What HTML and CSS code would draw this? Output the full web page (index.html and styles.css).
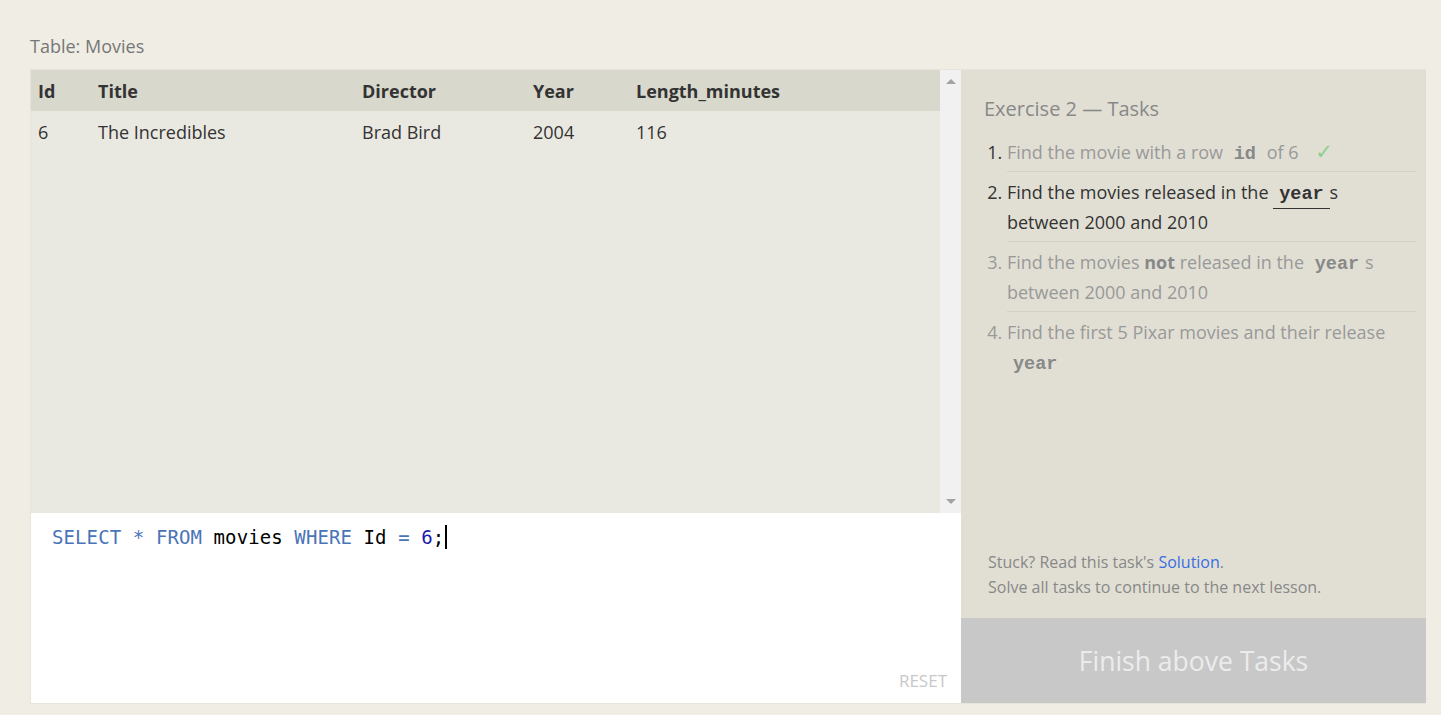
FILE: index.html
```html
<!DOCTYPE html>
<html>
<head>
<meta charset="utf-8">
<link rel="stylesheet" href="styles.css">
</head>
<body>
<div class="page">
  <div class="table-title">Table: Movies</div>
  <div class="main">
    <div class="left">
      <div class="results">
        <div class="table-wrap">
          <table class="data">
            <thead>
              <tr><th class="c-id">Id</th><th class="c-title">Title</th><th class="c-dir">Director</th><th class="c-year">Year</th><th>Length_minutes</th></tr>
            </thead>
            <tbody>
              <tr><td>6</td><td>The Incredibles</td><td>Brad Bird</td><td>2004</td><td>116</td></tr>
            </tbody>
          </table>
        </div>
        <div class="scrollbar">
          <span class="arrow up"></span>
          <span class="arrow down"></span>
        </div>
      </div>
      <div class="editor">
        <div class="code"><span class="kw">SELECT</span> <span class="kw">*</span> <span class="kw">FROM</span> movies <span class="kw">WHERE</span> Id <span class="kw">=</span> <span class="num">6</span>;<span class="cursor"></span></div>
        <div class="reset">RESET</div>
      </div>
    </div>
    <div class="right">
      <div class="tasks">
        <div class="tasks-title">Exercise 2 — Tasks</div>
        <ol class="task-list">
          <li class="done"><span class="t">Find the movie with a row <code>id</code> of 6</span> <span class="check">✓</span></li>
          <li class="active">Find the movies released in the <code class="ul">year</code>s between 2000 and 2010</li>
          <li class="todo">Find the movies <b>not</b> released in the <code>year</code>s between 2000 and 2010</li>
          <li class="todo">Find the first 5 Pixar movies and their release <code>year</code></li>
        </ol>
        <div class="footer-note">
          <div>Stuck? Read this task's <a class="sol">Solution</a>.</div>
          <div>Solve all tasks to continue to the next lesson.</div>
        </div>
      </div>
      <div class="finish">Finish above Tasks</div>
    </div>
  </div>
</div>
</body>
</html>
```
FILE: styles.css
```css
html, body {
  margin: 0;
  padding: 0;
  background: #f0ede5;
}
body {
  font-family: "Open Sans", "Noto Sans", sans-serif;
  color: #333;
}
.page {
  padding: 34px 15px 11px 30px;
}
.table-title {
  font-size: 18px;
  line-height: 24px;
  color: #777;
  margin-bottom: 11px;
}
.main {
  display: flex;
  height: 635px;
  border: 1px solid #e6e4dc;
  border-right: none;
  box-sizing: border-box;
}
.left {
  width: 930px;
  display: flex;
  flex-direction: column;
}
.results {
  height: 443px;
  display: flex;
  background: #eae9e1;
}
.table-wrap {
  flex: 1;
}
.data {
  border-collapse: collapse;
  width: 100%;
  font-size: 18px;
}
.data th {
  background: #d9d8cc;
  text-align: left;
  font-weight: 700;
  height: 40px;
  padding: 1px 0 0 7px;
  color: #333;
  vertical-align: middle;
}
.data td {
  height: 39px;
  padding: 1px 0 0 7px;
  color: #333;
}
.c-id { width: 53px; }
.c-title { width: 257px; }
.c-dir { width: 164px; }
.c-year { width: 96px; }
.scrollbar {
  width: 21px;
  background: #f1f1f1;
  display: flex;
  flex-direction: column;
  justify-content: space-between;
  align-items: center;
  padding: 9px 0 9px;
  box-sizing: border-box;
}
.arrow {
  width: 0;
  height: 0;
  border-left: 5px solid transparent;
  border-right: 5px solid transparent;
}
.arrow.up { border-bottom: 5px solid #a3a3a3; }
.arrow.down { border-top: 5px solid #a3a3a3; }
.editor {
  flex: 1;
  background: #fff;
  display: flex;
  flex-direction: column;
  justify-content: space-between;
  padding: 12px 14px 11px 21px;
}
.code {
  font-family: "DejaVu Sans Mono", "Liberation Mono", monospace;
  font-size: 19px;
  letter-spacing: 0.1px;
  line-height: 24px;
  color: #000;
  white-space: pre;
}
.kw { color: #4a74b8; }
.num { color: #1c1ab0; }
.cursor {
  display: inline-block;
  width: 2px;
  height: 24px;
  background: #000;
  vertical-align: top;
  margin-left: 1px;
}
.reset {
  align-self: flex-end;
  font-size: 17px;
  line-height: 22px;
  color: #c8c8c8;
}
.right {
  flex: 1;
  display: flex;
  flex-direction: column;
  background: #e1dfd4;
}
.tasks {
  flex: 1;
  display: flex;
  flex-direction: column;
  padding: 25px 10px 18px 23px;
}
.tasks-title {
  font-size: 20px;
  line-height: 28px;
  color: #888;
  margin-bottom: 9px;
}
.task-list {
  margin: 0;
  padding: 0;
  list-style: decimal outside;
  flex: 1;
}
.task-list li {
  margin-left: 23px;
  font-size: 18px;
  line-height: 30px;
  padding: 5px 14px 4px 0;
  border-bottom: 1px solid #d4d2c7;
}
.task-list li:last-child {
  border-bottom: none;
}
.task-list code {
  font-family: "Liberation Mono", "DejaVu Sans Mono", monospace;
  font-weight: 700;
  font-size: 18.5px;
  line-height: 1;
  padding: 0 6px;
}
.done { color: #333; }
.done .t { color: #999; }
.done code { color: #888; }
.check {
  color: #8dcf8d;
  margin-left: 12px;
  font-family: "DejaVu Sans", sans-serif;
  font-size: 21px;
  line-height: 1;
}
.active { color: #333; }
.active code.ul {
  border-bottom: 1px solid #333;
  padding-bottom: 3px;
}
.todo { color: #999; }
.todo code, .todo b { color: #888; }
.footer-note {
  font-size: 16px;
  line-height: 25px;
  color: #888;
  padding-left: 4px;
}
.sol { color: #3a6ee0; }
.finish {
  height: 85px;
  background: #c8c8c8;
  color: #ececec;
  font-size: 26.5px;
  display: flex;
  align-items: center;
  justify-content: center;
}
```
